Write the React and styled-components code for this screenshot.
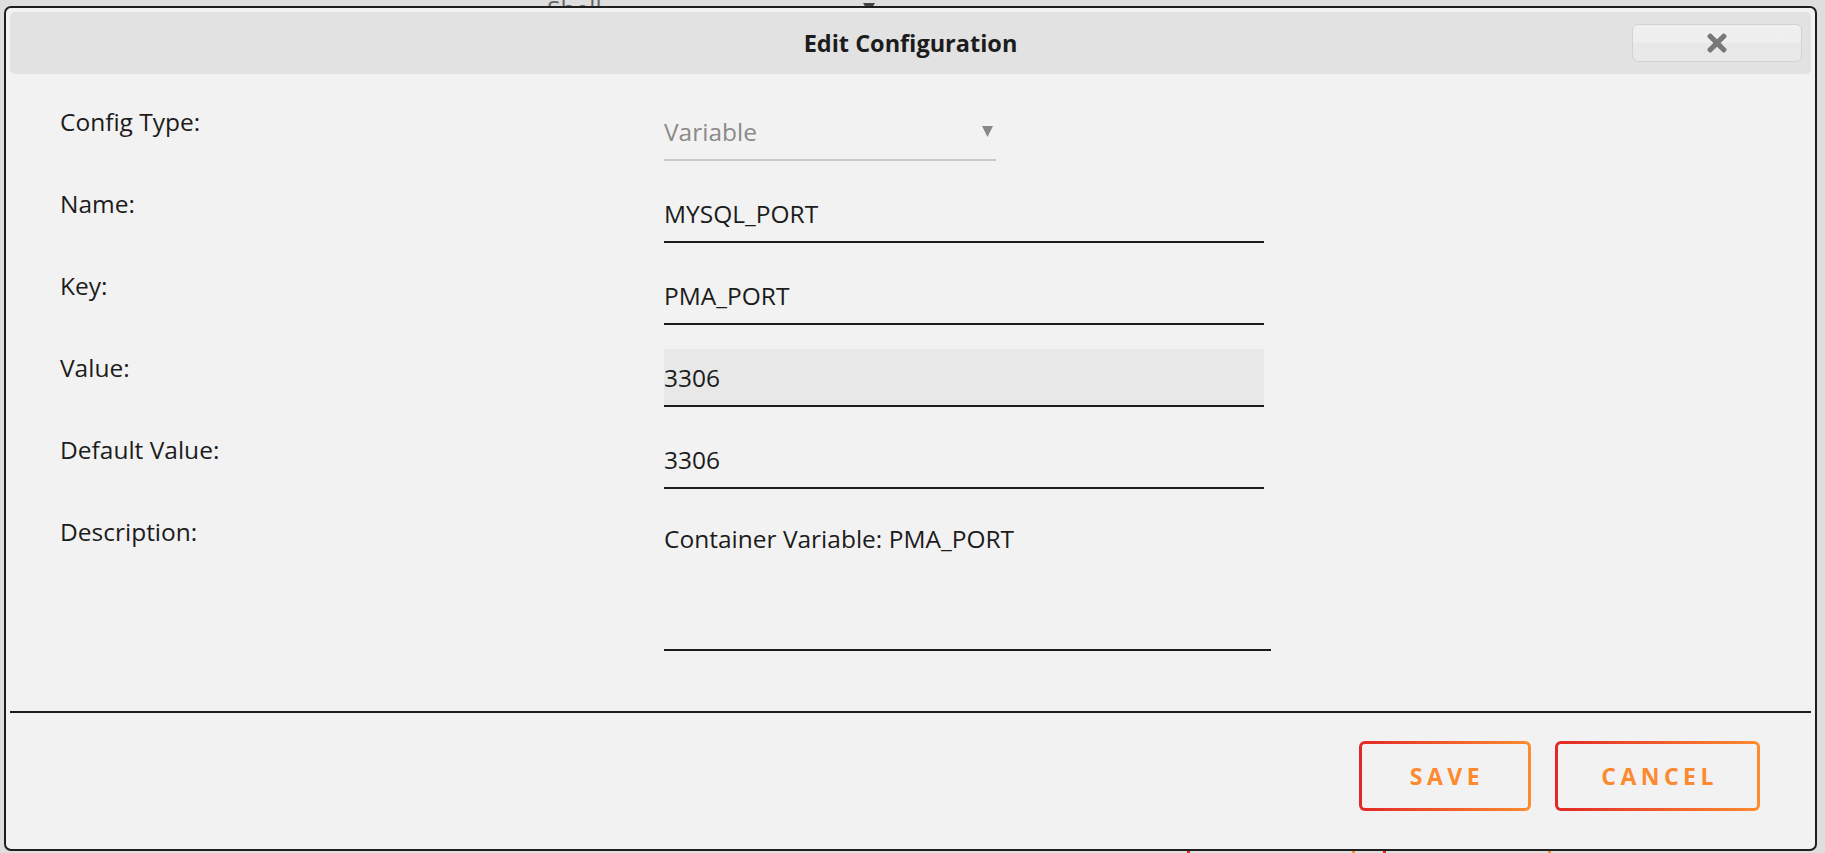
import React from 'react';
import styled, { createGlobalStyle } from 'styled-components';
import { FaTimes } from 'react-icons/fa';

const GlobalStyle = createGlobalStyle`
  html, body { margin: 0; padding: 0; }
  body {
    background: #dedede;
    font-family: "Open Sans", "Liberation Sans", sans-serif;
    color: #1c1c1c;
    overflow: hidden;
  }
  * { box-sizing: border-box; }
`;

/* ---------- page behind the dialog ---------- */
const Page = styled.div`
  height: 853px;
  overflow: hidden;
  display: flex;
  flex-direction: column;
  justify-content: space-between;
`;

const BgTop = styled.div`
  display: flex;
  align-items: flex-start;
  padding-left: 547px;
  margin-top: -9px;
`;

const BgText = styled.span`
  width: 316px;
  font-size: 24.5px;
  line-height: 36px;
  color: #666;
`;

const BgArrow = styled.span`
  width: 0;
  height: 0;
  border-left: 6px solid transparent;
  border-right: 6px solid transparent;
  border-top: 10px solid #444;
  margin-top: 12px;
`;

const BgBottom = styled.div`
  display: flex;
  gap: 28px;
  padding-left: 1187px;
  margin-bottom: -52px;
`;

const BgButton = styled.div`
  width: 168px;
  height: 70px;
  border: 3px solid transparent;
  border-radius: 6px;
  background: linear-gradient(#dedede, #dedede) padding-box,
    linear-gradient(90deg, #e22828, #ff8c2f) border-box;
`;

/* ---------- dialog ---------- */
const Dialog = styled.div`
  position: fixed;
  top: 6px;
  left: 4px;
  width: 1813px;
  height: 845px;
  display: flex;
  flex-direction: column;
  background: #f2f2f2;
  border: 2px solid #1e1e1e;
  border-radius: 7px;
  padding: 4px;
`;

const Header = styled.div`
  display: grid;
  grid-template-columns: 1fr auto 1fr;
  align-items: center;
  height: 62px;
  background: #e2e2e2;
  border-radius: 5px;
  flex-shrink: 0;
`;

const Title = styled.h1`
  grid-column: 2;
  margin: 0;
  font-size: 23.5px;
  font-weight: 700;
  color: #1c1c1c;
`;

const CloseButton = styled.button`
  grid-column: 3;
  justify-self: end;
  margin-right: 9px;
  width: 170px;
  height: 38px;
  display: flex;
  align-items: center;
  justify-content: center;
  border: 1px solid #d2d2d2;
  border-radius: 6px;
  background: linear-gradient(#f0f0f0 0%, #eeeeee 50%, #e8e8e8 50%, #e9e9e9 100%);
  color: #787878;
  padding: 0;
  cursor: pointer;
`;

const Form = styled.div`
  display: grid;
  grid-template-columns: 604px 1fr;
  row-gap: 24px;
  align-items: start;
  padding: 29px 0 60px 50px;
`;

const Label = styled.label`
  font-size: 24.5px;
  line-height: 38px;
  color: #1c1c1c;
`;

const SelectBox = styled.div`
  width: 332px;
  height: 58px;
  display: flex;
  align-items: center;
  justify-content: space-between;
  padding-right: 3px;
  border-bottom: 2px solid #c9c9c9;
  color: #8a8a8a;
  font-size: 24.5px;
`;

const TextInput = styled.input`
  display: block;
  width: 600px;
  height: 58px;
  margin: 0;
  padding: 0;
  border: none;
  border-bottom: 2px solid #1c1c1c;
  border-radius: 0;
  outline: none;
  background: ${(p) => (p.$active ? '#e8e8e8' : 'transparent')};
  font-family: inherit;
  font-size: 24.5px;
  color: #1c1c1c;
`;

const TextArea = styled.textarea`
  display: block;
  width: 607px;
  height: 138px;
  margin: 0;
  padding: 9px 0 0 0;
  border: none;
  border-bottom: 2px solid #1c1c1c;
  border-radius: 0;
  outline: none;
  resize: none;
  background: transparent;
  font-family: inherit;
  font-size: 24.5px;
  line-height: 34px;
  color: #1c1c1c;
`;

const Footer = styled.div`
  display: flex;
  justify-content: flex-end;
  gap: 24px;
  border-top: 2px solid #1c1c1c;
  padding: 28px 51px 0 0;
`;

const ActionButton = styled.button`
  height: 70px;
  min-width: 172px;
  padding: 0 39px 0 43.5px;
  border: 3px solid transparent;
  border-radius: 6px;
  background: linear-gradient(#f2f2f2, #f2f2f2) padding-box,
    linear-gradient(90deg, #e22828, #ff8c2f) border-box;
  color: #fb8a30;
  font-family: inherit;
  font-size: 23px;
  font-weight: 700;
  letter-spacing: 4.5px;
  text-transform: uppercase;
  cursor: pointer;
`;

const Arrow = () => (
  <svg width="11" height="11" viewBox="0 0 11 11">
    <polygon points="0,0 11,0 5.5,11" fill="#888" />
  </svg>
);

export default function App() {
  return (
    <>
      <GlobalStyle />
      <Page>
        <BgTop>
          <BgText>Shell</BgText>
          <BgArrow />
        </BgTop>
        <BgBottom>
          <BgButton />
          <BgButton />
        </BgBottom>
      </Page>
      <Dialog role="dialog">
        <Header>
          <Title>Edit Configuration</Title>
          <CloseButton aria-label="close">
            <FaTimes size={28} />
          </CloseButton>
        </Header>
        <Form>
          <Label>Config Type:</Label>
          <SelectBox>
            <span>Variable</span>
            <Arrow />
          </SelectBox>

          <Label>Name:</Label>
          <TextInput defaultValue="MYSQL_PORT" />

          <Label>Key:</Label>
          <TextInput defaultValue="PMA_PORT" />

          <Label>Value:</Label>
          <TextInput $active defaultValue="3306" />

          <Label>Default Value:</Label>
          <TextInput defaultValue="3306" />

          <Label>Description:</Label>
          <TextArea defaultValue="Container Variable: PMA_PORT" />
        </Form>
        <Footer>
          <ActionButton>Save</ActionButton>
          <ActionButton>Cancel</ActionButton>
        </Footer>
      </Dialog>
    </>
  );
}
